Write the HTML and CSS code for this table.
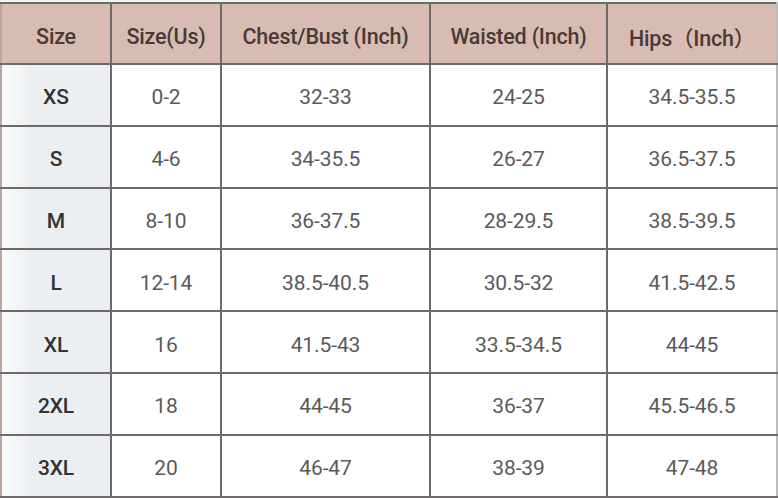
FILE: index.html
```html
<!DOCTYPE html>
<html>
<head>
<meta charset="utf-8">
<link rel="stylesheet" href="styles.css">
</head>
<body>
<table class="size-table">
  <thead>
    <tr>
      <th class="c1">Size</th>
      <th class="c2">Size(Us)</th>
      <th class="c3">Chest/Bust (Inch)</th>
      <th class="c4">Waisted (Inch)</th>
      <th class="c5">Hips（Inch）</th>
    </tr>
  </thead>
  <tbody>
    <tr><td class="size">XS</td><td>0-2</td><td>32-33</td><td>24-25</td><td>34.5-35.5</td></tr>
    <tr><td class="size">S</td><td>4-6</td><td>34-35.5</td><td>26-27</td><td>36.5-37.5</td></tr>
    <tr><td class="size">M</td><td>8-10</td><td>36-37.5</td><td>28-29.5</td><td>38.5-39.5</td></tr>
    <tr><td class="size">L</td><td>12-14</td><td>38.5-40.5</td><td>30.5-32</td><td>41.5-42.5</td></tr>
    <tr><td class="size">XL</td><td>16</td><td>41.5-43</td><td>33.5-34.5</td><td>44-45</td></tr>
    <tr><td class="size">2XL</td><td>18</td><td>44-45</td><td>36-37</td><td>45.5-46.5</td></tr>
    <tr><td class="size">3XL</td><td>20</td><td>46-47</td><td>38-39</td><td>47-48</td></tr>
  </tbody>
</table>
</body>
</html>
```
FILE: styles.css
```css
html, body {
  margin: 0;
  padding: 0;
  background: #f4f4f4;
}
body {
  padding-top: 2px;
  font-family: "Roboto", "Liberation Sans", "Noto Sans CJK SC", sans-serif;
}
.size-table {
  border-collapse: collapse;
  width: 778px;
  table-layout: fixed;
  background: #ffffff;
}
.size-table th,
.size-table td {
  border: 2px solid #6e6a69;
  text-align: center;
  vertical-align: middle;
  padding: 5px 0 0;
}
.size-table th {
  height: 54px;
  background: #d8bcb3;
  color: #4a3935;
  font-size: 21.5px;
  font-weight: 500;
  letter-spacing: -0.2px;
}
.size-table td {
  height: 54.8px;
  color: #5a5a5a;
  font-size: 21px;
  font-weight: 400;
  letter-spacing: -0.1px;
}
.size-table td.size {
  background: linear-gradient(to right, #fbfbfb 0px, #eceff2 30px, #eceff2 100%);
  color: #333333;
  font-weight: 500;
}
.c1 { width: 108px; }
.c2 { width: 108px; }
.c3 { width: 207px; }
.c4 { width: 175px; }
.c5 { width: auto; }
.size-table tr > :first-child { border-left-color: #b7a6a2; }
.size-table tr > :last-child { border-right-color: #bcbcbc; }
```
